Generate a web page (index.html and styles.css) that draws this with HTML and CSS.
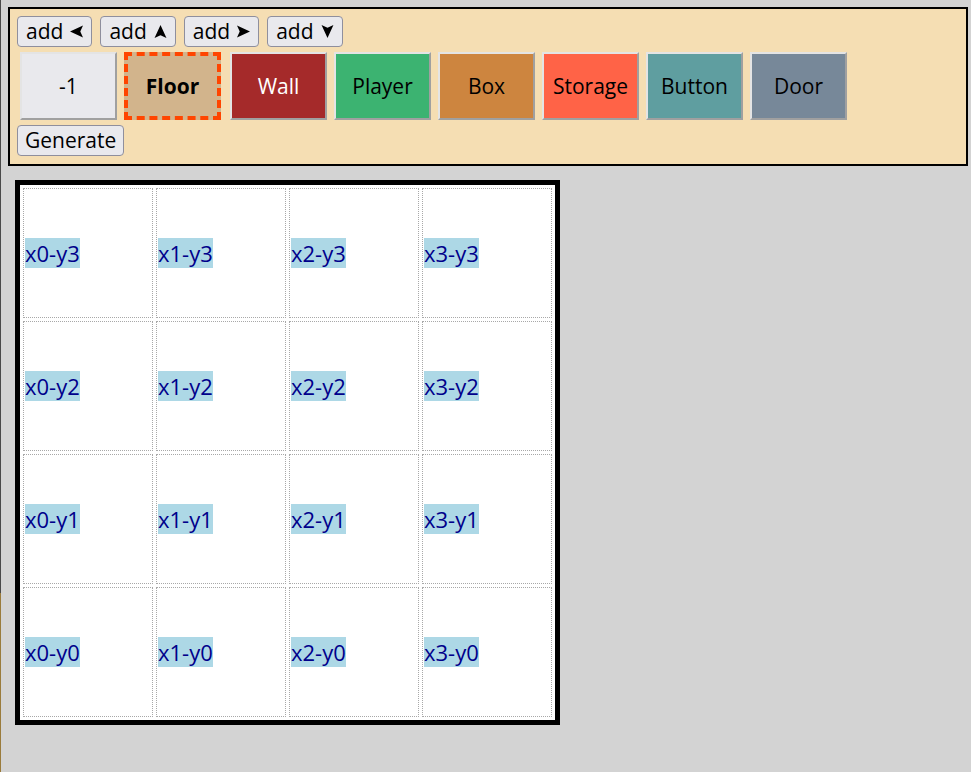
FILE: index.html
```html
<!DOCTYPE html>
<html>
<head>
<meta charset="utf-8">
<link rel="stylesheet" href="styles.css">
</head>
<body>
<div class="edge"></div>
<div class="panel">
  <div class="add-row">
    <button class="add">add <svg class="arrow" viewBox="0 0 12 12"><path d="M12 0.5 L0 6 L12 11.5 L9.5 6 Z"/></svg></button>
    <button class="add">add <svg class="arrow" viewBox="0 0 12 12"><path d="M0.5 12 L6 0 L11.5 12 L6 9.5 Z"/></svg></button>
    <button class="add">add <svg class="arrow" viewBox="0 0 12 12"><path d="M0 0.5 L12 6 L0 11.5 L2.5 6 Z"/></svg></button>
    <button class="add">add <svg class="arrow" viewBox="0 0 12 12"><path d="M0.5 0 L6 12 L11.5 0 L6 2.5 Z"/></svg></button>
  </div>
  <div class="tile-row">
    <button class="tile t-none">-1</button>
    <button class="tile t-floor">Floor</button>
    <button class="tile t-wall">Wall</button>
    <button class="tile t-player">Player</button>
    <button class="tile t-box">Box</button>
    <button class="tile t-storage">Storage</button>
    <button class="tile t-button">Button</button>
    <button class="tile t-door">Door</button>
  </div>
  <div class="gen-row">
    <button class="gen">Generate</button>
  </div>
</div>
<table class="grid">
  <tr><td><span class="lbl">x0-y3</span></td><td><span class="lbl">x1-y3</span></td><td><span class="lbl">x2-y3</span></td><td><span class="lbl">x3-y3</span></td></tr>
  <tr><td><span class="lbl">x0-y2</span></td><td><span class="lbl">x1-y2</span></td><td><span class="lbl">x2-y2</span></td><td><span class="lbl">x3-y2</span></td></tr>
  <tr><td><span class="lbl">x0-y1</span></td><td><span class="lbl">x1-y1</span></td><td><span class="lbl">x2-y1</span></td><td><span class="lbl">x3-y1</span></td></tr>
  <tr><td><span class="lbl">x0-y0</span></td><td><span class="lbl">x1-y0</span></td><td><span class="lbl">x2-y0</span></td><td><span class="lbl">x3-y0</span></td></tr>
</table>
</body>
</html>
```
FILE: styles.css
```css
html, body {
  background: #d3d3d3;
}
body {
  margin: 7px 0 0 8px;
  font-family: "Open Sans", "DejaVu Sans", sans-serif;
  overflow: hidden;
}
.edge {
  position: fixed;
  left: 0;
  top: 0;
  width: 1px;
  height: 593px;
  background: #4a4a4a;
}
.edge::after {
  content: "";
  position: absolute;
  left: 0;
  top: 593px;
  width: 1px;
  height: 200px;
  background: #9a7b3c;
}
.panel {
  width: 960px;
  box-sizing: border-box;
  border: 2px solid #000;
  background: #f5deb3;
  padding: 7px 7px 8px 7px;
  display: flex;
  flex-direction: column;
  gap: 5px;
}
.add-row {
  display: flex;
  gap: 8px;
}
button {
  font-family: "Open Sans", "DejaVu Sans", sans-serif;
  color: #000;
}
.add, .gen {
  height: 31px;
  box-sizing: border-box;
  border: 1px solid #8f8f9d;
  border-radius: 4px;
  background: #e9e9ed;
  font-size: 21px;
  padding: 0 8px;
  display: flex;
  align-items: center;
  gap: 7px;
  line-height: 1;
}
.arrow {
  width: 13px;
  height: 13px;
  fill: #000;
}
.tile-row {
  display: flex;
  gap: 7px;
  padding-left: 3px;
}
.tile {
  width: 97px;
  height: 68px;
  box-sizing: border-box;
  border-width: 2px;
  border-style: solid;
  border-color: #e4e4e4 #a0a0a0 #a0a0a0 #e4e4e4;
  font-size: 21px;
  padding: 0;
  border-radius: 0;
}
.t-none { background: #e9e9ed; }
.t-floor {
  background: #d2b48c;
  border: 4px dashed #ff4500;
  font-weight: bold;
  margin-right: 2px;
}
.t-wall { background: #a52a2a; color: #fff; }
.t-player { background: #3cb371; }
.t-box { background: #cd853f; }
.t-storage { background: #ff6347; }
.t-button { background: #5f9ea0; }
.t-door { background: #778899; }
.gen-row {
  display: flex;
}
.gen {
  padding: 0 7px;
}
.grid {
  margin: 14px 0 0 7px;
  border: 5px solid #000;
  background: #fff;
  border-spacing: 3px;
}
.grid td {
  width: 126px;
  height: 126px;
  border: 1px dotted #a8a8a8;
  padding: 1px;
  vertical-align: middle;
}
.lbl {
  background: #add8e6;
  color: #00008b;
  font-size: 22px;
  line-height: 26px;
  font-family: "Open Sans", "DejaVu Sans", sans-serif;
}
```
